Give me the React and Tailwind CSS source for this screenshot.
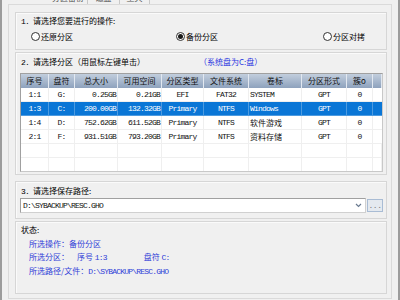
import React from 'react';

const cjk = { fontFamily: '"Noto Sans CJK SC", sans-serif' };
const mono = { fontFamily: '"Liberation Mono", "Noto Sans CJK SC", monospace' };

const cols = 'grid grid-cols-[28px_26px_43px_44px_42px_45px_53px_45px_26px_1fr]';

const rows = [
  ['1:1', 'G:', '0.25GB', '0.21GB', 'EFI', 'FAT32', 'SYSTEM', 'GPT', '0'],
  ['1:3', 'C:', '200.00GB', '132.32GB', 'Primary', 'NTFS', 'Windows', 'GPT', '0'],
  ['1:4', 'D:', '752.62GB', '611.52GB', 'Primary', 'NTFS', '软件游戏', 'GPT', '0'],
  ['2:1', 'F:', '931.51GB', '793.20GB', 'Primary', 'NTFS', '资料存储', 'GPT', '0'],
];

const headers = ['序号', '盘符', '总大小', '可用空间', '分区类型', '文件系统', '卷标', '分区形式', '簇o', ''];
const align = ['center', 'center', 'right', 'right', 'center', 'center', 'left', 'center', 'center'];

const Radio = ({ checked, label, className = '' }) => (
  <div className={`flex items-center gap-[1px] ${className}`}>
    <span className="w-[9px] h-[9px] rounded-full border border-[#333] bg-white flex items-center justify-center">
      {checked && <span className="w-[5px] h-[5px] rounded-full bg-[#1a1a1a]" />}
    </span>
    <span className="text-[8px] leading-[9px] text-black" style={cjk}>{label}</span>
  </div>
);

const Group = ({ className = '', children }) => (
  <div className={`w-[372px] border border-[#d6d6d6] shadow-[inset_1px_1px_0_#fafafa] ${className}`}>
    {children}
  </div>
);

const isCjk = (s) => /[\u4e00-\u9fff]/.test(s);

const Cell = ({ text, a, selected }) => {
  const justify = a === 'right' ? 'justify-end pr-[1px]' : a === 'left' ? 'justify-start pl-[1px]' : 'justify-center';
  return (
    <div className={`flex items-center h-[14px] border-r border-b ${selected ? 'border-[#4d9be0] text-white' : 'border-[#efefef] text-[#111]'} ${justify}`}>
      {isCjk(text) ? (
        <span className="text-[8px] leading-[10px]" style={cjk}>{text}</span>
      ) : (
        <span className="text-[8px] leading-[10px] tracking-[-0.8px]" style={mono}>{text}</span>
      )}
    </div>
  );
};

export default function App() {
  return (
    <div className="w-[400px] h-[300px] bg-[#f0f0f0] border-l-2 border-r-2 border-[#9c9c9c] overflow-hidden flex flex-col">
      {/* tab strip, scrolled off the top */}
      <div className="flex ml-[47px] h-[4px] overflow-hidden">
        {[['分区备份', 'w-[39px]'], ['磁盘', 'w-[32px]'], ['工具', 'w-[30px]']].map(([t, w]) => (
          <div key={t} className={`${w} h-[4px] border-r border-[#c8c8c8] flex justify-center overflow-hidden`}>
            <span className="text-[8px] leading-[10px] -mt-[7px] text-[#555]" style={cjk}>{t}</span>
          </div>
        ))}
      </div>

      <div className="ml-[6px] w-[384px] h-[295px] border border-[#dadada] bg-[#f0f0f0] pl-[6px] pt-[7px] flex flex-col">
        <Group className="h-[38px] pt-[3px] pl-[5px]">
          <div className="text-[8px] leading-[10px] text-black" style={cjk}>
            <span style={mono} className="tracking-[-0.8px]">1. </span>请选择您要进行的操作:
          </div>
          <div className="flex mt-[5px] pl-[10px]">
            <Radio label="还原分区" />
            <Radio label="备份分区" checked className="ml-[103px]" />
            <Radio label="分区对拷" className="ml-[105px]" />
          </div>
        </Group>

        <Group className="h-[123px] mt-[2px] pt-[4px] pl-[4px]">
          <div className="flex text-[8px] leading-[10px] pl-[1px]" style={cjk}>
            <span className="text-black">
              <span style={mono} className="tracking-[-0.8px]">2. </span>请选择分区（用鼠标左键单击）
            </span>
            <span className="ml-[54px] text-[#2a35e0]">（系统盘为C:盘）</span>
          </div>
          <div className="mt-[5px] w-[363px] h-[99px] border border-[#a0a0a0] border-r-[#c8c8c8] border-b-[#c8c8c8] bg-white overflow-hidden">
            <div className={`${cols} h-[14px] bg-gradient-to-b from-[#c2cedd] to-[#8ea2bd]`}>
              {headers.map((h, i) => (
                <div key={i} className="flex items-center justify-center border-r border-[#e2e8f0] text-[8px] leading-[10px] text-[#111]" style={cjk}>
                  {h}
                </div>
              ))}
            </div>
            {rows.map((r, ri) => {
              const sel = ri === 1;
              return (
                <div key={ri} className={`${cols} ${sel ? 'bg-[#0a76d6]' : 'bg-white'}`}>
                  {r.map((c, ci) => (
                    <Cell key={ci} text={c} a={align[ci]} selected={sel} />
                  ))}
                  <div className={`h-[14px] border-b ${sel ? 'border-[#4d9be0]' : 'border-[#efefef]'}`} />
                </div>
              );
            })}
            {[0, 1].map((k) => (
              <div key={k} className={cols}>
                {headers.map((_, i) => (
                  <div key={i} className="h-[14px] border-r border-b border-[#efefef]" />
                ))}
              </div>
            ))}
          </div>
        </Group>

        <Group className="h-[38px] mt-[6px] pt-[4px] pl-[4px]">
          <div className="text-[8px] leading-[10px] text-black pl-[1px]" style={cjk}>
            <span style={mono} className="tracking-[-0.8px]">3. </span>请选择保存路径:
          </div>
          <div className="flex items-center mt-[1px]">
            <div className="w-[346px] h-[15px] border border-[#a0a0a0] border-r-[#d0d0d0] border-b-[#d0d0d0] bg-white flex items-center justify-between pl-[2px] pr-[3px]">
              <span className="text-[8px] leading-[10px] tracking-[-0.8px] text-[#111]" style={mono}>D:\SYBACKUP\RESC.GHO</span>
              <svg width="7" height="5" viewBox="0 0 7 5" fill="none" stroke="#6a7a90" strokeWidth="1.2">
                <path d="M1 1 L3.5 3.5 L6 1" />
              </svg>
            </div>
            <div className="ml-[1px] w-[16px] h-[13px] border border-[#a9bcd4] bg-[#e4e9ef] flex items-end justify-center pb-[2px]">
              <span className="text-[8px] leading-[6px] tracking-[-0.5px] text-[#777]" style={mono}>...</span>
            </div>
          </div>
        </Group>

        <Group className="h-[73px] mt-[2px] pt-[3px] pl-[5px]">
          <div className="text-[8px] leading-[10px] text-black" style={cjk}>状态:</div>
          <div className="mt-[2px] pl-[8px] text-[8px] leading-[13px] text-[#3140d8]" style={cjk}>
            <div>所选操作：备份分区</div>
            <div className="flex">
              <span>所选分区：</span>
              <span className="ml-[8px]">序号 <span style={mono} className="tracking-[-0.8px]">1:3</span></span>
              <span className="ml-[37px]">盘符 <span style={mono} className="tracking-[-0.8px]">C:</span></span>
            </div>
            <div>
              所选路径/文件：<span style={mono} className="tracking-[-0.8px]">D:\SYBACKUP\RESC.GHO</span>
            </div>
          </div>
        </Group>
      </div>
    </div>
  );
}
